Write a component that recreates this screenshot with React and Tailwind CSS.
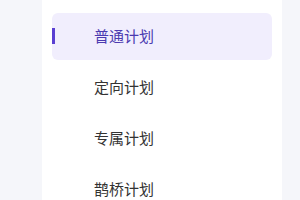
const plans = ['普通计划', '定向计划', '专属计划', '鹊桥计划'];

export default function App() {
  const active = 0;
  return (
    <div className="w-[300px] h-[200px] overflow-hidden bg-[#f5f6fa] flex" style={{ fontFamily: '"Noto Sans CJK SC", "Noto Sans", sans-serif' }}>
      <div className="ml-[42px] w-[240px] h-full bg-white px-[10px] pt-[13px] flex flex-col gap-[4px]">
        {plans.map((p, i) => (
          <div
            key={p}
            className={`relative shrink-0 h-[47px] rounded-md flex items-center pl-[42px] text-[15px] ${
              i === active ? 'bg-[#f1eefd] text-[#4b3ab0]' : 'text-[#333333]'
            }`}
          >
            {i === active && <span className="absolute left-0 top-[15px] w-[3px] h-[16px] bg-[#5a3fd2]" />}
            {p}
          </div>
        ))}
      </div>
    </div>
  );
}
